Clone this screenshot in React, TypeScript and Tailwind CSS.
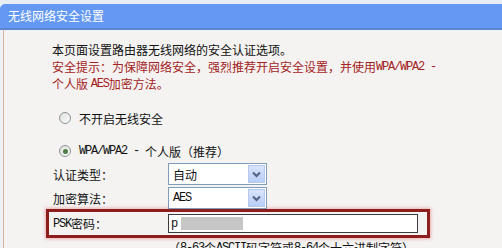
import React from "react";

const Lat = ({ children }: { children: React.ReactNode }) => (
  <span className="font-['Liberation_Mono',monospace] text-[12px] tracking-[-1.2px] leading-none">{children}</span>
);

const Radio = ({ checked }: { checked?: boolean }) => (
  <span className="w-[12px] h-[12px] rounded-full border border-[#8c9498] bg-gradient-to-br from-[#dcdcd8] to-[#ffffff] flex items-center justify-center shrink-0">
    {checked && <span className="w-[5px] h-[5px] rounded-full bg-[#4f7f4a]" />}
  </span>
);

const Select = ({ value, latin }: { value: string; latin?: boolean }) => (
  <div className="w-[99px] h-[22px] border border-[#7f9db9] bg-white flex items-stretch">
    <div className="flex-1 flex items-center pl-[4px] text-[12px] text-[#111]">
      {latin ? <Lat>{value}</Lat> : value}
    </div>
    <div className="w-[17px] m-[1px] border border-[#b5c8ef] bg-gradient-to-b from-[#d9e4fb] to-[#b9cdf5] flex items-center justify-center">
      <svg width="9" height="7" viewBox="0 0 9 7">
        <path d="M1 1.5 L4.5 5 L8 1.5" stroke="#4d6185" strokeWidth="2" fill="none" />
      </svg>
    </div>
  </div>
);

export default function App() {
  return (
    <div className="w-[502px] h-[248px] overflow-hidden bg-[#eef2f6] font-['Noto_Sans_CJK_SC',sans-serif] text-[12px] text-[#111]">
      <div className="h-[4px] bg-[#e8eef4]" />
      <div className="h-[26px] rounded-tl-[5px] bg-[#6498f2] border-b-2 border-[#5a86d4] flex items-center pl-[8px] text-white text-[12px]">
        无线网络安全设置
      </div>
      <div className="ml-[3px] h-[218px] border-l border-[#d3b39a] bg-[#f4f3f2] pl-[48px] pt-[11px] leading-[17px]">
        <div className="h-[17px] flex items-center whitespace-pre">本页面设置路由器无线网络的安全认证选项。</div>
        <div className="h-[17px] flex items-center whitespace-pre text-[#a42222]">
          安全提示：为保障网络安全，强烈推荐开启安全设置，并使用<Lat>WPA/WPA2 -</Lat>
        </div>
        <div className="h-[17px] flex items-center whitespace-pre text-[#a42222]">
          个人版 <Lat>AES</Lat>加密方法。
        </div>
        <div className="mt-[17px] h-[18px] flex items-center pl-[7px] gap-[8px]">
          <Radio />
          <span>不开启无线安全</span>
        </div>
        <div className="mt-[15px] h-[18px] flex items-center pl-[7px] gap-[8px]">
          <Radio checked />
          <span className="flex items-center whitespace-pre">
            <Lat>WPA/WPA2 - </Lat>个人版（推荐）
          </span>
        </div>
        <div className="mt-[3px] flex items-center h-[22px]">
          <div className="w-[116px] pl-[1px]">认证类型：</div>
          <Select value="自动" />
        </div>
        <div className="mt-[2px] flex items-center h-[22px]">
          <div className="w-[116px] pl-[1px]">加密算法：</div>
          <Select value="AES" latin />
        </div>
        <div className="-ml-[6px] w-[384px] h-[29px] border-[3px] border-[#8e1d1d] shadow-[0_0_3px_1px_rgba(225,120,120,0.55)] flex items-center pl-[4px]">
          <div className="w-[115px] flex items-center">
            <Lat>PSK</Lat>密码：
          </div>
          <div className="w-[250px] h-[19px] border border-[#3c3c40] bg-white flex items-center pl-[2px] gap-[4px]">
            <Lat>p</Lat>
            <span className="w-[62px] h-[13px] bg-[#c6c6c6]" />
          </div>
        </div>
        <div className="pl-[116px] mt-[1px] h-[17px] flex items-center whitespace-pre">
          （<Lat>8-63</Lat>个<Lat>ASCII</Lat>码字符或<Lat>8-64</Lat>个十六进制字符）
        </div>
      </div>
    </div>
  );
}
